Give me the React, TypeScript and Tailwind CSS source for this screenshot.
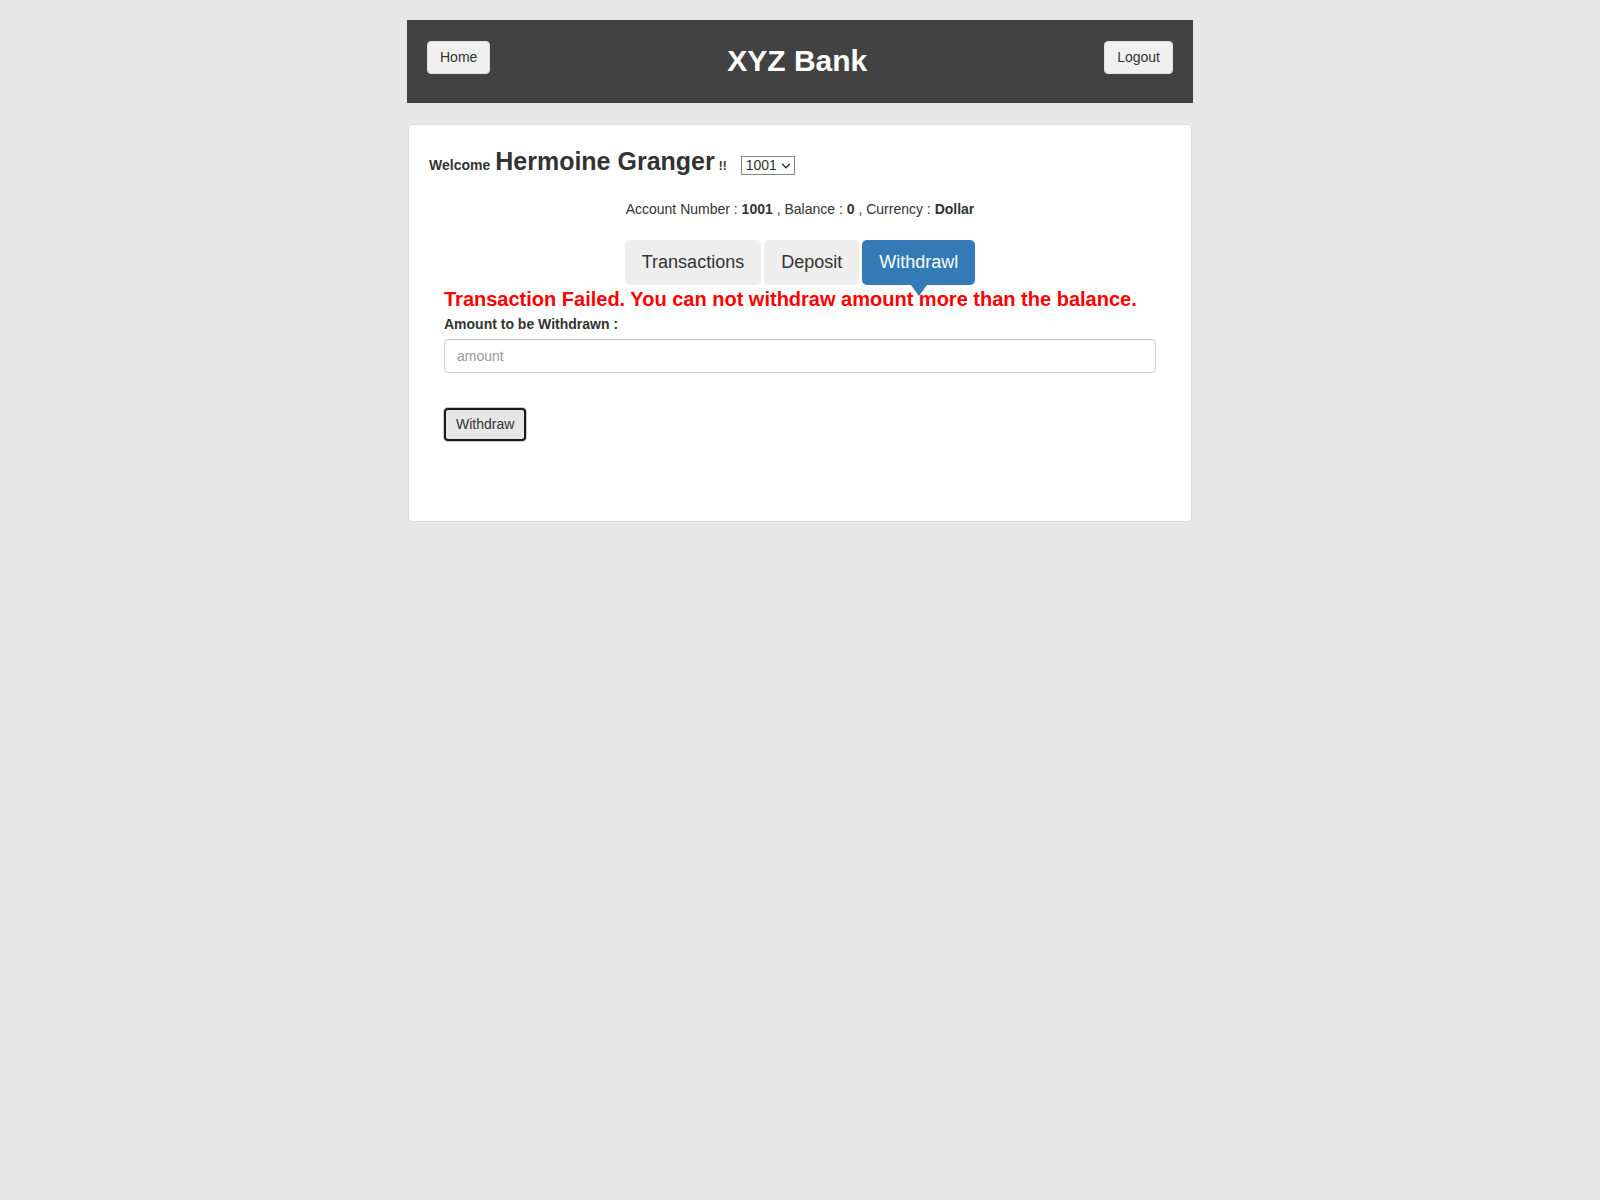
import React from "react";
import { ChevronDown } from "lucide-react";

const tabs = ["Transactions", "Deposit", "Withdrawl"];

export default function App() {
  const active = "Withdrawl";

  return (
    <div
      className="min-h-[1200px] bg-[#e7e7e7] text-[#333] pt-[20px]"
      style={{ fontFamily: '"Liberation Sans", Arial, sans-serif' }}
    >
      <div className="w-[786px] mx-auto">
        {/* Header */}
        <div className="h-[83px] bg-[#424242] flex justify-between items-start px-[20px] pt-[21px]">
          <button className="h-[33px] px-[12px] bg-[#f0f0f0] border border-[#e0e0e0] rounded-[4px] text-[14px] text-[#333]">
            Home
          </button>
          <h1 className="mt-[3px] text-[30px] leading-[33px] font-bold text-white">
            XYZ Bank
          </h1>
          <button className="h-[33px] px-[12px] bg-[#f0f0f0] border border-[#e0e0e0] rounded-[4px] text-[14px] text-[#333]">
            Logout
          </button>
        </div>

        {/* Account card */}
        <div className="mt-[21px] mx-px bg-white border border-[#dcdcdc] rounded-[4px] px-[20px] pt-[18px] pb-[80px]">
          <div className="flex items-baseline h-[34px]">
            <strong className="text-[14px]">Welcome</strong>
            <span className="ml-[5px] text-[25px] font-bold">Hermoine Granger</span>
            <span className="ml-[4px] text-[12px] font-bold">!!</span>
            <span className="relative ml-[14px] inline-block">
              <select
                defaultValue="1001"
                className="appearance-none block h-[19px] w-[54px] border border-[#858585] bg-white text-[14px] leading-[17px] text-[#333] pl-[4px]"
              >
                <option value="1001">1001</option>
                <option value="1002">1002</option>
                <option value="1003">1003</option>
              </select>
              <ChevronDown
                className="absolute right-[2px] top-[3px] pointer-events-none text-[#333]"
                size={14}
                strokeWidth={2.5}
              />
            </span>
          </div>

          <div className="mt-[22px] text-center text-[14px] leading-[20px]">
            Account Number : <strong>1001</strong> , Balance : <strong>0</strong> , Currency :{" "}
            <strong>Dollar</strong>
          </div>

          <div className="mt-[21px] flex justify-center gap-[3px]">
            {tabs.map((t) => (
              <button
                key={t}
                className={
                  t === active
                    ? "relative h-[45px] px-[17px] rounded-[5px] bg-[#337ab7] text-white text-[18px]"
                    : "relative h-[45px] px-[17px] rounded-[5px] bg-[#eeeeee] text-[#333] text-[18px]"
                }
              >
                {t}
                {t === active && (
                  <span className="absolute left-1/2 -translate-x-1/2 top-full w-0 h-0 border-x-[8px] border-x-transparent border-t-[11px] border-t-[#337ab7] z-10" />
                )}
              </button>
            ))}
          </div>

          <div className="px-[15px]">
            <div className="mt-[3px] text-[20px] leading-[22px] font-bold text-[#ff0000]">
              Transaction Failed. You can not withdraw amount more than the balance.
            </div>
            <label className="block mt-[4px] mb-[5px] text-[14px] leading-[20px] font-bold">
              Amount to be Withdrawn :
            </label>
            <input
              type="number"
              placeholder="amount"
              className="block w-full h-[34px] px-[12px] border border-[#cccccc] rounded-[4px] text-[14px] placeholder:text-[#999] shadow-[inset_0_1px_1px_rgba(0,0,0,0.075)]"
            />
            <button className="mt-[35px] h-[33px] px-[10px] bg-[#e6e6e6] border-2 border-[#1a1a1a] rounded-[4px] shadow-[0_0_0_1px_#c8c8c8] text-[14px] text-[#333]">
              Withdraw
            </button>
          </div>
        </div>
      </div>
    </div>
  );
}
